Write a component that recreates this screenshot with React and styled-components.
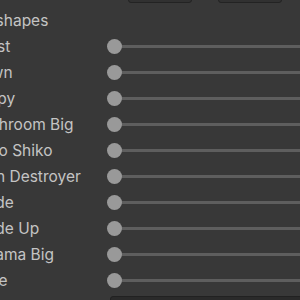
import styled, { createGlobalStyle } from 'styled-components';

const GlobalStyle = createGlobalStyle`
  html, body {
    margin: 0;
    padding: 0;
    background: #383838;
  }
`;

const Viewport = styled.div`
  width: 300px;
  height: 300px;
  overflow: hidden;
  background: #383838;
  font-family: Inter, 'Noto Sans', sans-serif;
  font-size: 15.5px;
  color: #c4c4c4;
`;

const Panel = styled.div`
  width: 420px;
  margin-left: -46px;
  margin-top: -20px;
  display: flex;
  flex-direction: column;
`;

const Toolbar = styled.div`
  height: 27px;
  display: flex;
  align-items: flex-start;
  gap: 26px;
  padding-left: 174px;
`;

const ToolButton = styled.div`
  width: 64px;
  height: 23px;
  box-sizing: border-box;
  background: #313131;
  border: 1px solid #232323;
  border-radius: 3px;
`;

const Header = styled.div`
  height: 26px;
  display: flex;
  align-items: center;
  white-space: nowrap;
`;

const Row = styled.div`
  height: 26px;
  display: flex;
  align-items: center;
  padding-left: 13.5px;
`;

const Label = styled.div`
  width: 139.5px;
  flex: none;
  white-space: nowrap;
`;

const Slider = styled.div`
  flex: 1;
  height: 15px;
  position: relative;
  display: flex;
  align-items: center;
`;

const Track = styled.div`
  flex: 1;
  height: 3px;
  margin-left: 7px;
  background: #5e5e5e;
`;

const Knob = styled.div`
  position: absolute;
  left: 0;
  top: 0;
  width: 15px;
  height: 15px;
  border-radius: 50%;
  background: #999999;
`;

const FieldRow = styled.div`
  height: 24px;
  display: flex;
  align-items: flex-start;
  padding-left: 156px;
  padding-top: 3px;
`;

const Field = styled.div`
  flex: 1;
  height: 20px;
  box-sizing: border-box;
  background: #2a2a2a;
  border: 1px solid #212121;
  border-radius: 3px;
`;

const shapes = [
  'Chest',
  'Frown',
  'Happy',
  'Mushroom Big',
  'Shiko Shiko',
  'Brain Destroyer',
  'Shade',
  'Shade Up',
  'Panama Big',
  'Smile',
];

export default function App() {
  return (
    <Viewport>
      <GlobalStyle />
      <Panel>
        <Toolbar>
          <ToolButton />
          <ToolButton />
        </Toolbar>
        <Header>Blendshapes</Header>
        {shapes.map((name) => (
          <Row key={name}>
            <Label>{name}</Label>
            <Slider>
              <Track />
              <Knob />
            </Slider>
          </Row>
        ))}
        <FieldRow>
          <Field />
        </FieldRow>
      </Panel>
    </Viewport>
  );
}
